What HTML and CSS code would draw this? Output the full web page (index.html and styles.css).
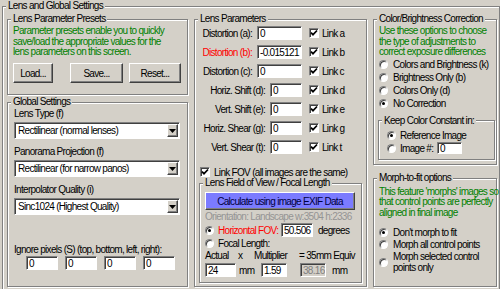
FILE: index.html
```html
<!DOCTYPE html>
<html lang="en">
<head>
    <meta charset="UTF-8">
    <title>Lens and Global Settings</title>
    <link rel="stylesheet" href="styles.css">
</head>
<body>
    <fieldset class="group outer">
        <legend>Lens and Global Settings</legend>
        <div class="columns">

            <div class="col col-left">
                <fieldset class="group presets">
                    <legend>Lens Parameter Presets</legend>
                    <div class="inner">
                        <p class="note">Parameter presets enable you to quickly<br>save/load the appropriate values for the<br>lens parameters on this screen.</p>
                        <div class="preset-buttons">
                            <button class="btn btn-load">Load...</button>
                            <button class="btn btn-save">Save...</button>
                            <button class="btn btn-reset">Reset...</button>
                        </div>
                    </div>
                </fieldset>

                <fieldset class="group global">
                    <legend>Global Settings</legend>
                    <div class="inner">
                        <div class="caption first">Lens Type (f)</div>
                        <div class="select"><span class="select-text">Rectilinear (normal lenses)</span><span class="drop"><svg width="7" height="4" viewBox="0 0 7 4"><path d="M0 0h7L3.5 4z"/></svg></span></div>
                        <div class="caption">Panorama Projection (f)</div>
                        <div class="select"><span class="select-text">Rectilinear (for narrow panos)</span><span class="drop"><svg width="7" height="4" viewBox="0 0 7 4"><path d="M0 0h7L3.5 4z"/></svg></span></div>
                        <div class="caption">Interpolator Quality (i)</div>
                        <div class="select"><span class="select-text">Sinc1024 (Highest Quality)</span><span class="drop"><svg width="7" height="4" viewBox="0 0 7 4"><path d="M0 0h7L3.5 4z"/></svg></span></div>
                        <div class="caption ignore">Ignore pixels (S) (top, bottom, left, right):</div>
                        <div class="ignore-fields">
                            <input class="field" type="text" value="0">
                            <input class="field" type="text" value="0">
                            <input class="field" type="text" value="0">
                            <input class="field" type="text" value="0">
                        </div>
                    </div>
                </fieldset>
            </div>

            <div class="col col-mid">
                <fieldset class="group lens">
                    <legend>Lens Parameters</legend>
                    <div class="inner">
                        <div class="param">
                            <span class="param-label">Distortion (a):</span>
                            <input class="field wide" type="text" value="0">
                            <span class="check"><svg width="8" height="8" viewBox="0 0 8 8"><path d="M1 3.6l2 2.1 4-4.2"/></svg></span>
                            <span class="link">Link a</span>
                        </div>
                        <div class="param">
                            <span class="param-label red">Distortion (b):</span>
                            <input class="field wide" type="text" value="-0.015121">
                            <span class="check"><svg width="8" height="8" viewBox="0 0 8 8"><path d="M1 3.6l2 2.1 4-4.2"/></svg></span>
                            <span class="link">Link b</span>
                        </div>
                        <div class="param">
                            <span class="param-label">Distortion (c):</span>
                            <input class="field wide" type="text" value="0">
                            <span class="check"><svg width="8" height="8" viewBox="0 0 8 8"><path d="M1 3.6l2 2.1 4-4.2"/></svg></span>
                            <span class="link">Link c</span>
                        </div>
                        <div class="param">
                            <span class="param-label">Horiz. Shift (d):</span>
                            <input class="field narrow" type="text" value="0">
                            <span class="check"><svg width="8" height="8" viewBox="0 0 8 8"><path d="M1 3.6l2 2.1 4-4.2"/></svg></span>
                            <span class="link">Link d</span>
                        </div>
                        <div class="param">
                            <span class="param-label">Vert. Shift (e):</span>
                            <input class="field narrow" type="text" value="0">
                            <span class="check"><svg width="8" height="8" viewBox="0 0 8 8"><path d="M1 3.6l2 2.1 4-4.2"/></svg></span>
                            <span class="link">Link e</span>
                        </div>
                        <div class="param">
                            <span class="param-label">Horiz. Shear (g):</span>
                            <input class="field narrow" type="text" value="0">
                            <span class="check"><svg width="8" height="8" viewBox="0 0 8 8"><path d="M1 3.6l2 2.1 4-4.2"/></svg></span>
                            <span class="link">Link g</span>
                        </div>
                        <div class="param">
                            <span class="param-label">Vert. Shear (t):</span>
                            <input class="field narrow" type="text" value="0">
                            <span class="check"><svg width="8" height="8" viewBox="0 0 8 8"><path d="M1 3.6l2 2.1 4-4.2"/></svg></span>
                            <span class="link">Link t</span>
                        </div>

                        <div class="link-fov">
                            <span class="check"><svg width="8" height="8" viewBox="0 0 8 8"><path d="M1 3.6l2 2.1 4-4.2"/></svg></span>
                            <span>Link FOV (all images are the same)</span>
                        </div>

                        <fieldset class="group fov">
                            <legend>Lens Field of View / Focal Length</legend>
                            <div class="inner">
                                <button class="btn exif">Calculate using image EXIF Data</button>
                                <div class="orient">Orientation: Landscape w:3504 h:2336</div>
                                <div class="fov-row">
                                    <span class="radio on"></span>
                                    <span class="fov-label red">Horizontal FOV:</span>
                                    <input class="field fov-value" type="text" value="50.506">
                                    <span class="unit">degrees</span>
                                </div>
                                <div class="fov-row focal-row">
                                    <span class="radio"></span>
                                    <span>Focal Length:</span>
                                </div>
                                <div class="equiv">
                                    <span class="eq-actual">Actual</span>
                                    <span class="eq-x">x</span>
                                    <span class="eq-mult">Multiplier</span>
                                    <span>= 35mm Equiv</span>
                                </div>
                                <div class="focal">
                                    <input class="field f-actual" type="text" value="24">
                                    <span class="mm">mm</span>
                                    <input class="field f-mult" type="text" value="1.59">
                                    <input class="field f-equiv" type="text" value="38.16" disabled>
                                    <span class="mm-last">mm</span>
                                </div>
                            </div>
                        </fieldset>
                    </div>
                </fieldset>
            </div>

            <div class="col col-right">
                <fieldset class="group color">
                    <legend>Color/Brightness Correction</legend>
                    <div class="inner">
                        <p class="note">Use these options to choose<br>the type of adjustments to<br>correct exposure differences</p>
                        <div class="option"><span class="radio"></span>Colors and Brightness (k)</div>
                        <div class="option"><span class="radio"></span>Brightness Only (b)</div>
                        <div class="option"><span class="radio"></span>Colors Only (d)</div>
                        <div class="option"><span class="radio on"></span>No Correction</div>

                        <fieldset class="group keep">
                            <legend>Keep Color Constant in:</legend>
                            <div class="inner">
                                <div class="option"><span class="radio on"></span>Reference Image</div>
                                <div class="option"><span class="radio"></span><span class="image-label">Image #:</span><input class="field image-no" type="text" value="0"></div>
                            </div>
                        </fieldset>
                    </div>
                </fieldset>

                <fieldset class="group morph">
                    <legend>Morph-to-fit options</legend>
                    <div class="inner">
                        <p class="note">This feature 'morphs' images so<br>that control points are perfectly<br>aligned in final image</p>
                        <div class="option first"><span class="radio on"></span>Don't morph to fit</div>
                        <div class="option"><span class="radio"></span>Morph all control points</div>
                        <div class="option two-line"><span class="radio"></span><span>Morph selected control<br>points only</span></div>
                    </div>
                </fieldset>
            </div>

        </div>
    </fieldset>
</body>
</html>
```

FILE: styles.css
```css
* {
    box-sizing: border-box;
}

body {
    margin: 0;
    height: 289px;
    overflow: hidden;
    background-color: #d4d0c8;
    font-family: "Liberation Sans", Arial, sans-serif;
    font-size: 10px;
    letter-spacing: -0.7px;
    line-height: 11px;
    color: #000;
}

.red {
    color: #ff0000;
}

/* etched group boxes */
.group {
    margin: 0;
    padding: 0;
    min-width: 0;
    border: 1px solid #808080;
    box-shadow: inset 1px 1px 0 #fff, 1px 1px 0 #fff;
}

.group legend {
    margin-left: 3px;
    padding: 0 2px;
    line-height: 12px;
    background-color: #d4d0c8;
    white-space: nowrap;
}

.note {
    margin: 1px 0 0;
    line-height: 10.5px;
    color: #008000;
    white-space: nowrap;
}

.outer {
    margin-left: 2px;
    width: 498px;
}

.columns {
    display: flex;
    gap: 6px;
    padding: 1px 2px 3px 4px;
}

.col {
    display: flex;
    flex-direction: column;
}

.col-left {
    width: 181px;
}

.col-mid {
    width: 173px;
}

.col-right {
    width: 124px;
}

/* controls */
.field {
    flex: none;
    height: 14px;
    margin: 0;
    padding: 0 0 0 2px;
    border: 1px solid;
    border-color: #808080 #fff #fff #808080;
    box-shadow: inset 1px 1px 0 #404040;
    background-color: #fff;
    font: inherit;
    letter-spacing: inherit;
    color: #000;
    outline: none;
}

.field:disabled {
    background-color: #d4d0c8;
    color: #808080;
}

.btn {
    margin: 0;
    padding: 0;
    border: 1px solid;
    border-color: #fff #404040 #404040 #fff;
    box-shadow: inset -1px -1px 0 #808080;
    background-color: #d4d0c8;
    font: inherit;
    letter-spacing: inherit;
    color: #000;
}

.check {
    display: flex;
    align-items: center;
    justify-content: center;
    flex: none;
    width: 10px;
    height: 10px;
    border: 1px solid;
    border-color: #808080 #fff #fff #808080;
    box-shadow: inset 1px 1px 0 #404040;
    background-color: #fff;
}

.check svg {
    fill: none;
    stroke: #000;
    stroke-width: 1.7;
}

.radio {
    display: flex;
    align-items: center;
    justify-content: center;
    flex: none;
    width: 9px;
    height: 9px;
    border-radius: 50%;
    border: 1px solid;
    border-color: #808080 #fff #fff #808080;
    box-shadow: inset 1px 1px 0 #404040;
    background-color: #fff;
}

.radio.on::after {
    content: "";
    width: 3px;
    height: 3px;
    border-radius: 50%;
    background-color: #000;
}

.select {
    display: flex;
    align-items: center;
    height: 17px;
    margin-top: 3px;
    padding: 1px;
    border: 1px solid;
    border-color: #808080 #fff #fff #808080;
    box-shadow: inset 1px 1px 0 #404040;
    background-color: #fff;
}

.select-text {
    padding-left: 2px;
    white-space: nowrap;
}

.drop {
    display: flex;
    align-items: center;
    justify-content: center;
    width: 11px;
    height: 13px;
    margin-left: auto;
    border: 1px solid;
    border-color: #fff #404040 #404040 #fff;
    box-shadow: inset -1px -1px 0 #808080;
    background-color: #d4d0c8;
}

/* left column */
.presets {
    height: 82px;
}

.presets .inner {
    padding: 0 5px;
}

.preset-buttons {
    display: flex;
    margin-top: 5.5px;
}

.preset-buttons .btn {
    height: 20px;
}

.btn-load {
    width: 40px;
    margin-right: 17px;
}

.btn-save {
    width: 53px;
    margin-right: 6px;
}

.btn-reset {
    width: 52px;
}

.global {
    margin-top: 1px;
    height: 191px;
}

.global .inner {
    padding: 0 7px 0 6px;
}

.caption {
    margin-top: 7px;
    white-space: nowrap;
}

.caption.first {
    margin-top: 0;
}

.caption.ignore {
    margin-top: 29px;
}

.ignore-fields {
    display: flex;
    gap: 7px;
    margin: 1px 0 0 12px;
}

.ignore-fields .field {
    width: 32px;
}

/* lens parameters */
.lens {
    height: 274px;
}

.lens > .inner {
    padding: 0 4px 0 5px;
}

.param {
    display: flex;
    align-items: center;
    height: 14px;
    margin-top: 5px;
}

.param:first-child {
    margin-top: 1px;
}

.param-label {
    flex: 1;
    min-width: 0;
    padding-right: 5px;
    text-align: right;
    white-space: nowrap;
}

.field.wide {
    width: 45px;
}

.field.narrow {
    width: 32px;
}

.param .check {
    margin-left: 7px;
}

.link {
    flex: none;
    width: 40px;
    margin-left: 3px;
    white-space: nowrap;
}

.link-fov {
    display: flex;
    align-items: center;
    height: 10px;
    margin-top: 13px;
    white-space: nowrap;
}

.link-fov .check {
    margin-right: 4px;
}

.fov {
    margin: 0 0 0 -1px;
    height: 106px;
}

.fov .inner {
    padding: 0 6px 0 5px;
}

.btn.exif {
    display: block;
    width: 100%;
    height: 18px;
    margin-top: 3px;
    background-color: #7b7bff;
    color: #000040;
    white-space: nowrap;
}

.orient {
    margin-top: 1px;
    color: #949494;
    white-space: nowrap;
}

.fov-row {
    display: flex;
    align-items: center;
    height: 14px;
    margin-top: 1px;
    white-space: nowrap;
}

.fov-row .radio {
    margin-right: 4px;
}

.fov-label {
    flex: none;
    width: 63px;
}

.field.fov-value {
    width: 32px;
}

.unit {
    margin-left: 5px;
}

.fov-row.focal-row {
    height: 11px;
}

.equiv {
    display: flex;
    margin-top: 1px;
    white-space: nowrap;
}

.eq-actual {
    width: 33px;
}

.eq-x {
    width: 16px;
}

.eq-mult {
    width: 45px;
}

.focal {
    display: flex;
    align-items: center;
    margin-top: 2px;
}

.field.f-actual {
    width: 31px;
}

.mm {
    flex: none;
    width: 25px;
    padding-left: 3px;
}

.field.f-mult {
    width: 26px;
    margin-right: 13px;
}

.field.f-equiv {
    width: 26px;
}

.mm-last {
    margin-left: 6px;
}

/* right column */
.color {
    height: 152px;
}

.color > .inner,
.morph .inner {
    padding: 0 2px 0 5px;
}

.option {
    display: flex;
    align-items: center;
    height: 13px;
    white-space: nowrap;
}

.option .radio {
    margin-right: 5px;
}

.keep {
    width: 117px;
    height: 45px;
    margin: 5px 0 0 -1px;
}

.keep .inner {
    padding: 2px 0 0 8px;
}

.keep .option .radio {
    margin-right: 4px;
}

.image-label {
    flex: none;
    width: 37px;
}

.field.image-no {
    width: 25px;
    height: 12px;
}

.morph {
    height: 115px;
    margin-top: 7px;
}

.morph .note {
    margin-top: 2.5px;
}

.option.first {
    margin-top: 8px;
    height: 12px;
}

.option.two-line {
    height: 22px;
}
```
